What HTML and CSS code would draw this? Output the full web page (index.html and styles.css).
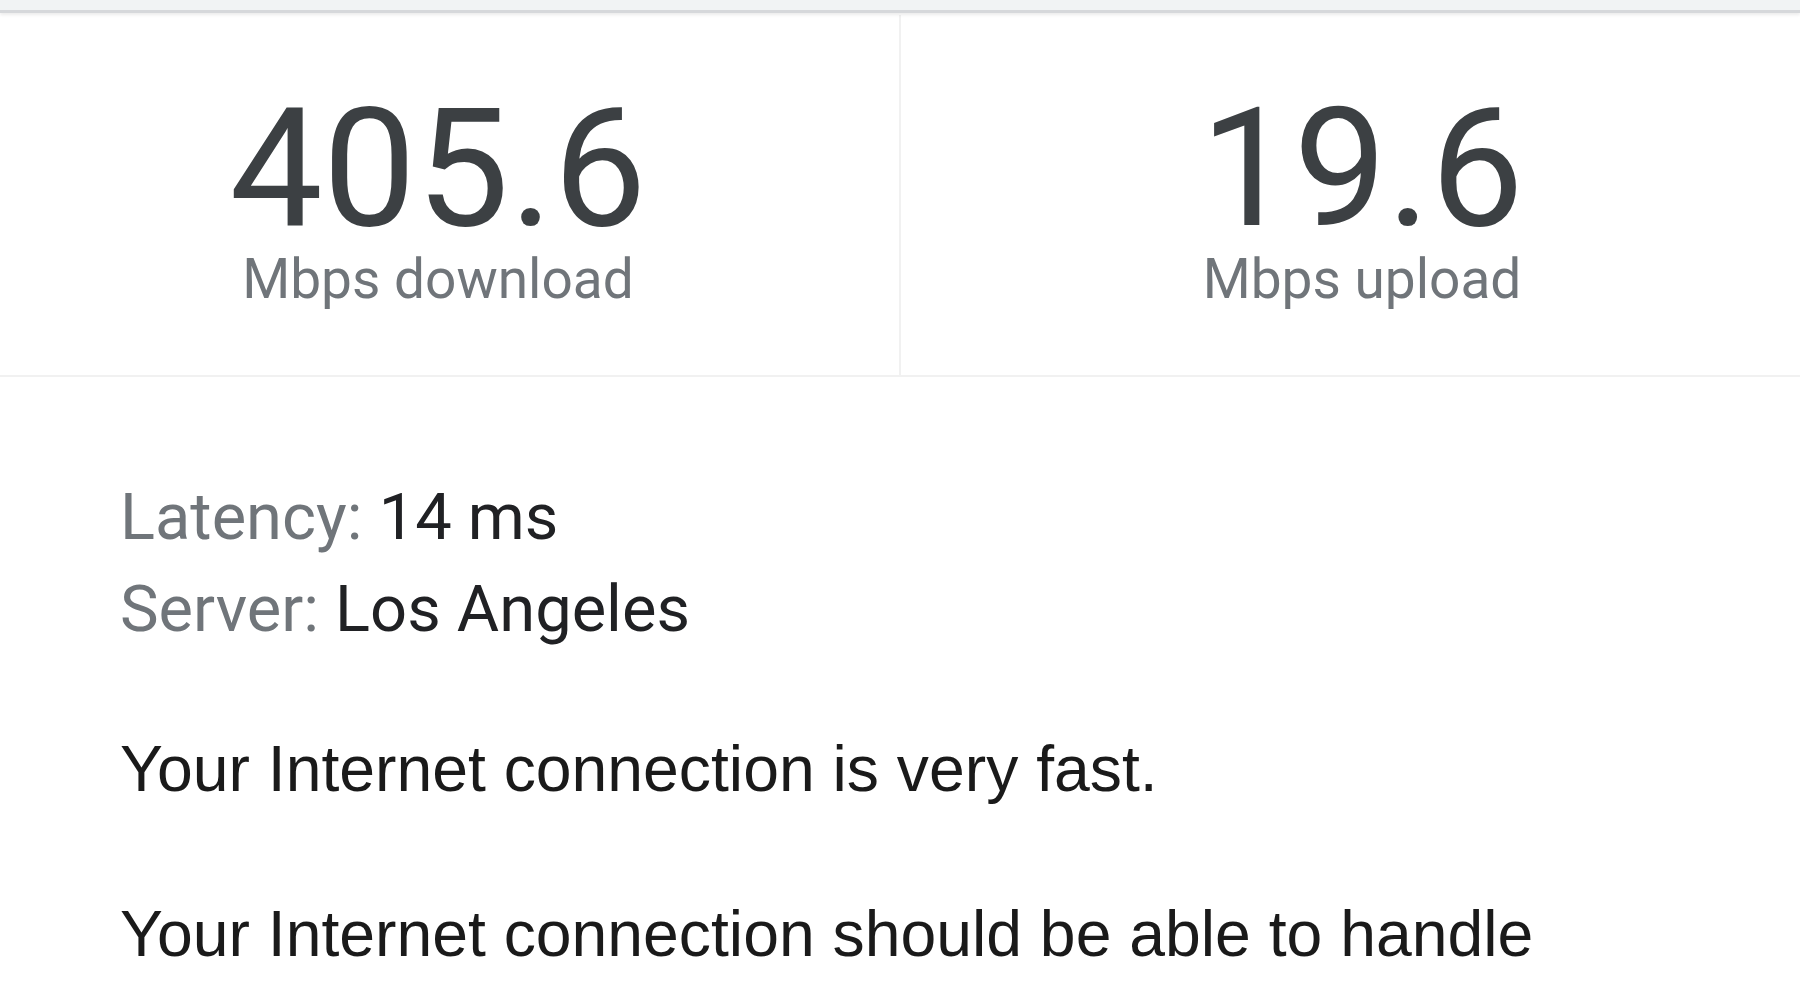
FILE: index.html
```html
<!DOCTYPE html>
<html lang="en">
<head>
<meta charset="utf-8">
<title>Internet speed test</title>
<link rel="stylesheet" href="styles.css">
</head>
<body>
<div class="topbar"></div>
<div class="stats">
  <div class="stat stat-left">
    <div class="stat-value">405.6</div>
    <div class="stat-label">Mbps download</div>
  </div>
  <div class="stat">
    <div class="stat-value">19.6</div>
    <div class="stat-label">Mbps upload</div>
  </div>
</div>
<div class="info">
  <div class="meta">
    <div class="meta-row"><span class="meta-key">Latency:</span> <span class="meta-val">14 ms</span></div>
    <div class="meta-row"><span class="meta-key">Server:</span> <span class="meta-val">Los Angeles</span></div>
  </div>
  <p class="verdict">Your Internet connection is very fast.</p>
  <p class="verdict verdict-second">Your Internet connection should be able to handle</p>
</div>
</body>
</html>
```
FILE: styles.css
```css
html, body {
  margin: 0;
  padding: 0;
  background: #ffffff;
  overflow: hidden;
}

body {
  width: 1800px;
  height: 1000px;
  font-family: Roboto, "Liberation Sans", sans-serif;
}

.topbar {
  height: 10px;
  background: #f1f3f4;
  border-bottom: 3px solid #d6d8db;
  box-shadow: 0 2px 3px rgba(0, 0, 0, 0.08);
  position: relative;
  z-index: 1;
}

.stats {
  display: flex;
  margin: 0 -23px;
  padding-top: 2px;
  border-bottom: 2px solid #f1f1f1;
}

.stat {
  flex: 1;
  display: flex;
  flex-direction: column;
  align-items: center;
  padding: 71px 0 68px;
}

.stat-left {
  border-right: 2px solid #f1f1f1;
}

.stat-value {
  font-family: Roboto, "Liberation Sans", sans-serif;
  font-size: 166px;
  line-height: 1;
  color: #3c4043;
}

.stat-label {
  font-family: Roboto, "Liberation Sans", sans-serif;
  font-size: 55px;
  line-height: 1;
  color: #70757a;
}

.info {
  padding: 94px 0 0 120px;
}

.meta-row {
  font-family: Roboto, "Liberation Sans", sans-serif;
  font-size: 65px;
  line-height: 92px;
  white-space: nowrap;
}

.meta-key {
  color: #70757a;
}

.meta-val {
  color: #202124;
}

.verdict {
  margin: 77px 0 0;
  font-family: "Liberation Sans", Arial, sans-serif;
  font-size: 64.3px;
  line-height: 75px;
  color: #1a1a1a;
  white-space: nowrap;
}

.verdict-second {
  margin-top: 90px;
}
```
